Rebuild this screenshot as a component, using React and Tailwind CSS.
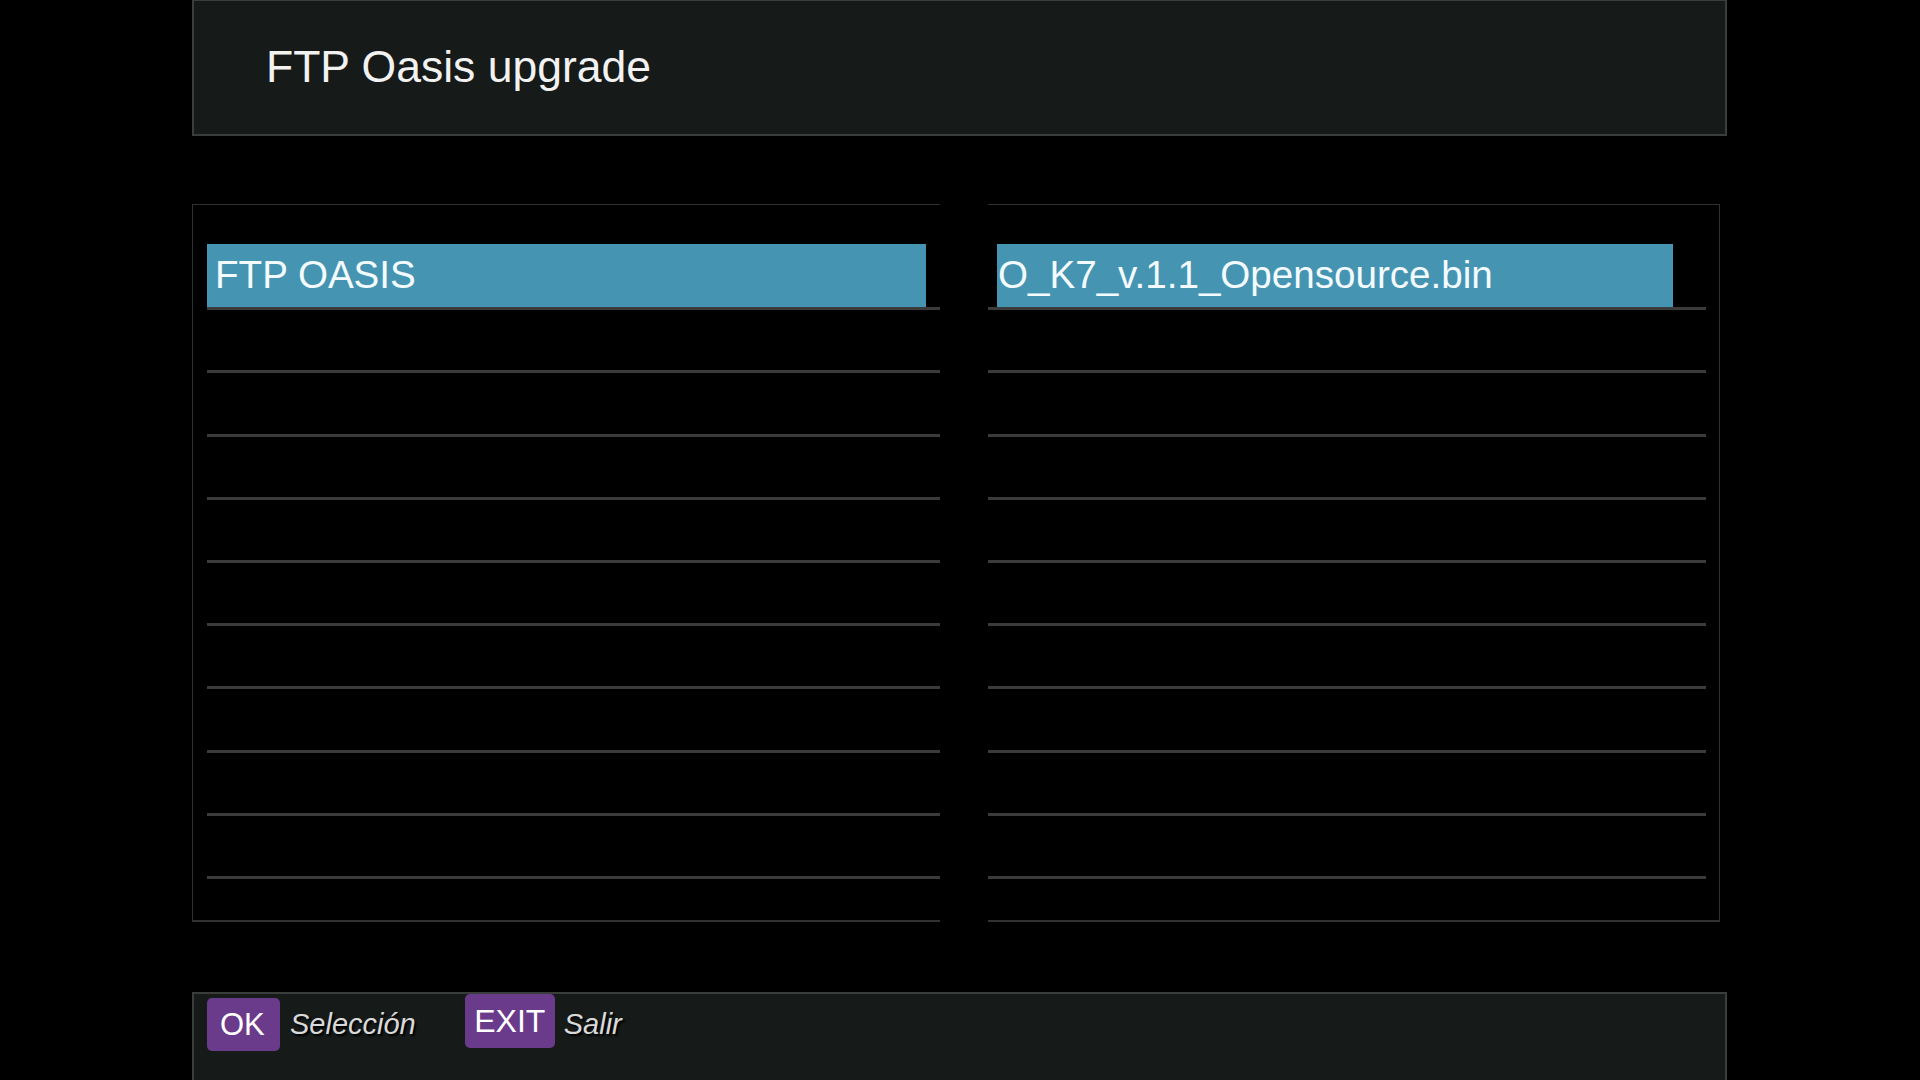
import React from 'react';

const ROWS = 10;

function ListPanel({ side, label }) {
  const isLeft = side === 'left';
  return (
    <div
      className={
        isLeft
          ? 'w-[748px] h-[718px] border-l border-t border-b-2 border-[#303231] pt-[42px] pl-[14px]'
          : 'w-[732px] h-[718px] border-r border-t border-b-2 border-[#303231] pt-[42px] pr-[13px]'
      }
    >
      {Array.from({ length: ROWS }).map((_, i) => (
        <div key={i} className="h-[63.2px] flex flex-col border-b-[3px] border-[#3a3b3b]">
          {i === 0 && (
            <div
              className={
                isLeft
                  ? 'h-[63px] -mt-[3px] mr-[14px] bg-[#4595b2] flex items-center pl-[8px]'
                  : 'h-[63px] -mt-[3px] ml-[9px] mr-[33px] bg-[#4595b2] flex items-center pl-[1px]'
              }
            >
              <span className="text-[38.6px] leading-none text-[#f4fbff] font-['Liberation_Sans',Arial,sans-serif]">
                {label}
              </span>
            </div>
          )}
        </div>
      ))}
    </div>
  );
}

export default function App() {
  return (
    <div className="w-[1920px] h-[1080px] bg-black overflow-hidden font-['Liberation_Sans',Arial,sans-serif]">
      <div className="ml-[192px] w-[1535px] flex flex-col">
        <div className="h-[136px] border-2 border-t border-[#3a3d3c] bg-[#161a19] pl-[72px] pt-[44px]">
          <h1 className="text-[44.5px] leading-[44px] text-[#f2f2f2]">FTP Oasis upgrade</h1>
        </div>

        <div className="mt-[68px] flex gap-[48px]">
          <ListPanel side="left" label="FTP OASIS" />
          <ListPanel side="right" label="O_K7_v.1.1_Opensource.bin" />
        </div>

        <div className="mt-[70px] h-[88px] border-2 border-b-0 border-[#3a3d3c] bg-[#161a19] flex items-start pl-[13px]">
          <div className="mt-[4px] w-[73px] h-[53px] rounded-[5px] bg-[#6a3a8b] flex items-center pl-[13px]">
            <span className="text-[31px] leading-none text-white">OK</span>
          </div>
          <span className="ml-[10px] mt-[16px] text-[29px] leading-none italic text-[#d9d9d9] [text-shadow:2px_2px_2px_#000]">
            Selección
          </span>
          <div className="ml-[49px] w-[90px] h-[54px] rounded-[5px] bg-[#6a3a8b] flex items-center justify-center">
            <span className="text-[32px] leading-none text-white">EXIT</span>
          </div>
          <span className="ml-[9px] mt-[16px] text-[29px] leading-none italic text-[#d9d9d9] [text-shadow:2px_2px_2px_#000]">
            Salir
          </span>
        </div>
      </div>
    </div>
  );
}
